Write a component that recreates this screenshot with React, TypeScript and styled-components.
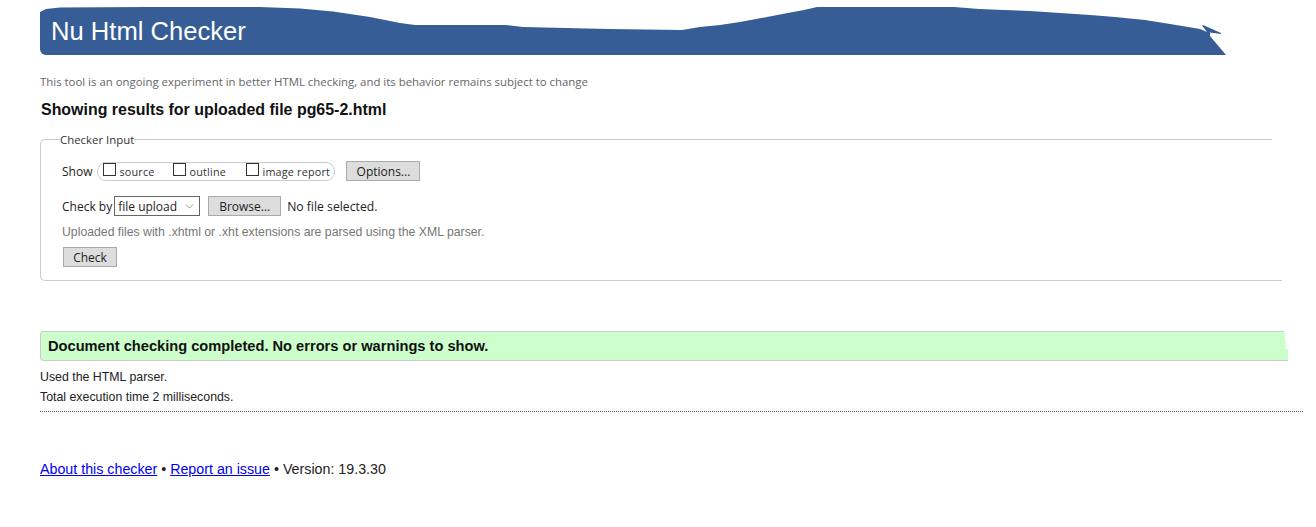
import styled, { createGlobalStyle } from 'styled-components';
import { ChevronDown } from 'lucide-react';

const GlobalStyle = createGlobalStyle`
	html, body {
		margin: 0;
		padding: 0;
		background: #fff;
		color: #222;
		font-family: 'Liberation Sans', Arial, sans-serif;
	}
`;

const App = () => {
	return (
		<>
			<GlobalStyle />
			<Page>
				<Banner>
					<Title>Nu Html Checker</Title>
				</Banner>
				<Intro>This tool is an ongoing experiment in better HTML checking, and its behavior remains subject to change</Intro>
				<ResultsHeading>Showing results for uploaded file pg65-2.html</ResultsHeading>

				<InputBox>
					<InputLegend>Checker Input</InputLegend>
					<ShowRow>
						<RowLabel $gap={5}>Show</RowLabel>
						<ShowOptions>
							<ShowOption $width={70}>
								<CheckBox type="checkbox" />
								source
							</ShowOption>
							<ShowOption $width={73}>
								<CheckBox type="checkbox" />
								outline
							</ShowOption>
							<ShowOption $width={84}>
								<CheckBox type="checkbox" />
								image report
							</ShowOption>
						</ShowOptions>
						<GreyButton $width={74} $left={11}>Options...</GreyButton>
					</ShowRow>
					<CheckByRow>
						<RowLabel $gap={2}>Check by</RowLabel>
						<SelectBox>
							<MethodSelect defaultValue="file">
								<option value="file">file upload</option>
								<option value="address">address</option>
								<option value="text">text input</option>
							</MethodSelect>
							<SelectArrow size={13} strokeWidth={1.1} />
						</SelectBox>
						<GreyButton $width={73} $left={8}>Browse...</GreyButton>
						<FileName>No file selected.</FileName>
					</CheckByRow>
					<ParserNote>Uploaded files with .xhtml or .xht extensions are parsed using the XML parser.</ParserNote>
					<GreyButton $width={54} $left={1}>Check</GreyButton>
				</InputBox>

				<SuccessBar>Document checking completed. No errors or warnings to show.</SuccessBar>
				<Detail>Used the HTML parser.</Detail>
				<Detail>Total execution time 2 milliseconds.</Detail>
				<DottedLine />

				<Footer>
					<a href="#about">About this checker</a> • <a href="#report">Report an issue</a> • Version: 19.3.30
				</Footer>
			</Page>
		</>
	);
};

export default App;

const Page = styled.div`
	width: 1263px;
	height: 520px;
	padding: 7px 0 0 40px;
	overflow: hidden;
`;

// banner with the torn wave along its top
const Banner = styled.header`
	width: 1186px;
	height: 48px;
	background: #365d95;
	border-bottom-left-radius: 6px;
	display: flex;
	align-items: center;
	padding-left: 11px;
	box-sizing: border-box;
	clip-path: polygon(
		0 5px, 6px 2px, 20px 0.5px, 107px 0, 220px 0, 260px 1.5px, 293px 4.5px, 330px 10px, 360px 16px,
		375px 18px, 383px 18px, 400px 18px, 466px 18px, 483px 20px, 569px 22px, 642px 23px, 660px 20px,
		680px 18px, 700px 15px, 727px 10px, 753px 5px, 764px 3px, 777px 0, 914px 0, 939px 2px, 964px 3px,
		990px 4px, 1020px 6px, 1050px 8px, 1075px 10px, 1105px 13px, 1130px 17px, 1160px 22px, 1167px 25px,
		1162px 18.5px, 1163px 18px, 1181px 26px, 1181px 27px, 1170px 25.5px, 1170px 29px, 1186px 48px, 0 48px
	);
`;
const Title = styled.h1`
	margin: 0;
	color: #fff;
	font-size: 25.6px;
	font-weight: normal;
	line-height: 48px;
`;

const Intro = styled.p`
	margin: 21px 0 0;
	font-family: 'Open Sans', sans-serif;
	font-size: 11.4px;
	line-height: 12px;
	color: #666;
`;
const ResultsHeading = styled.h2`
	margin: 12px 0 0 1px;
	font-size: 15.95px;
	line-height: 20px;
	font-weight: bold;
	color: #111;
`;

// fieldset loses its right edge and its top stops short of the bottom
const InputBox = styled.fieldset`
	width: 1242px;
	height: 151px;
	margin: 10px 0 0;
	padding: 13px 0 0 21px;
	box-sizing: border-box;
	border: 1px solid #ccc;
	border-right: none;
	border-radius: 5px 0 0 5px;
	clip-path: polygon(0 0, 1232px 0, 1232px 20px, 1242px 20px, 1242px 100%, 0 100%);
`;
const InputLegend = styled.legend`
	margin-left: -2px;
	padding: 2px 0 0;
	font-family: 'Open Sans', sans-serif;
	font-size: 11.4px;
	line-height: 16px;
	color: #333;
`;
const ShowRow = styled.div`
	display: flex;
	align-items: center;
	height: 20px;
`;
const CheckByRow = styled.div`
	display: flex;
	align-items: center;
	height: 20px;
	margin-top: 15px;
`;
const RowLabel = styled.span<{ $gap: number }>`
	font-family: 'Open Sans', sans-serif;
	font-size: 12px;
	color: #222;
	margin-right: ${(p) => p.$gap}px;
`;
const ShowOptions = styled.div`
	display: flex;
	width: 238px;
	height: 19px;
	box-sizing: border-box;
	padding-left: 5px;
	border: 1px solid #ccc;
	border-radius: 9px;
`;
const ShowOption = styled.label<{ $width: number }>`
	display: flex;
	align-items: center;
	width: ${(p) => p.$width}px;
	white-space: nowrap;
	font-family: 'Open Sans', sans-serif;
	font-size: 10.8px;
	letter-spacing: 0.2px;
	color: #333;
`;
const CheckBox = styled.input`
	appearance: none;
	width: 13px;
	height: 13px;
	margin: -3px 3px 0 0;
	border: 1px solid #333;
	background: #fff;
	flex: none;
`;
const GreyButton = styled.button<{ $width: number; $left: number }>`
	width: ${(p) => p.$width}px;
	height: 20px;
	margin-left: ${(p) => p.$left}px;
	padding: 0;
	box-sizing: border-box;
	background: #ddd;
	border: 1px solid #aaa;
	font-family: 'Open Sans', sans-serif;
	font-size: 12px;
	color: #222;
`;
const SelectBox = styled.div`
	position: relative;
	width: 86px;
	height: 20px;
`;
const MethodSelect = styled.select`
	appearance: none;
	display: block;
	width: 100%;
	height: 100%;
	padding: 0 0 0 3px;
	box-sizing: border-box;
	background: #fff;
	border: 1px solid #666;
	border-radius: 0;
	font-family: 'Open Sans', sans-serif;
	font-size: 12px;
	color: #222;
`;
const SelectArrow = styled(ChevronDown)`
	position: absolute;
	right: 4px;
	top: 4px;
	color: #555;
	pointer-events: none;
`;
const FileName = styled.span`
	margin-left: 6px;
	font-family: 'Open Sans', sans-serif;
	font-size: 12.2px;
	color: #222;
`;
const ParserNote = styled.p`
	margin: 9px 0 8px;
	font-size: 12.25px;
	line-height: 14px;
	color: #777;
`;

const SuccessBar = styled.div`
	width: 1248px;
	height: 30px;
	margin: 50px 0 6px;
	padding-left: 7px;
	box-sizing: border-box;
	background: #ccffcc;
	border: 1px solid #ccc;
	border-right: none;
	border-radius: 4px 0 0 4px;
	font-size: 14.65px;
	font-weight: bold;
	line-height: 29px;
	color: #111;
	clip-path: polygon(0 0, 1244px 0, 1244px 2px, 1245px 2px, 1245px 10px, 1246px 10px, 1246px 18px, 1248px 18px, 1248px 100%, 0 100%);
`;
const Detail = styled.p`
	margin: 0;
	font-size: 12.35px;
	line-height: 20px;
	color: #222;
`;
const DottedLine = styled.hr`
	width: 1263px;
	margin: 4px 0 0;
	border: none;
	border-top: 1px dotted #555;
`;
const Footer = styled.footer`
	margin-top: 48px;
	font-size: 14.25px;
	line-height: 18px;
	color: #222;
	& > a {
		color: #0000ee;
	}
`;
